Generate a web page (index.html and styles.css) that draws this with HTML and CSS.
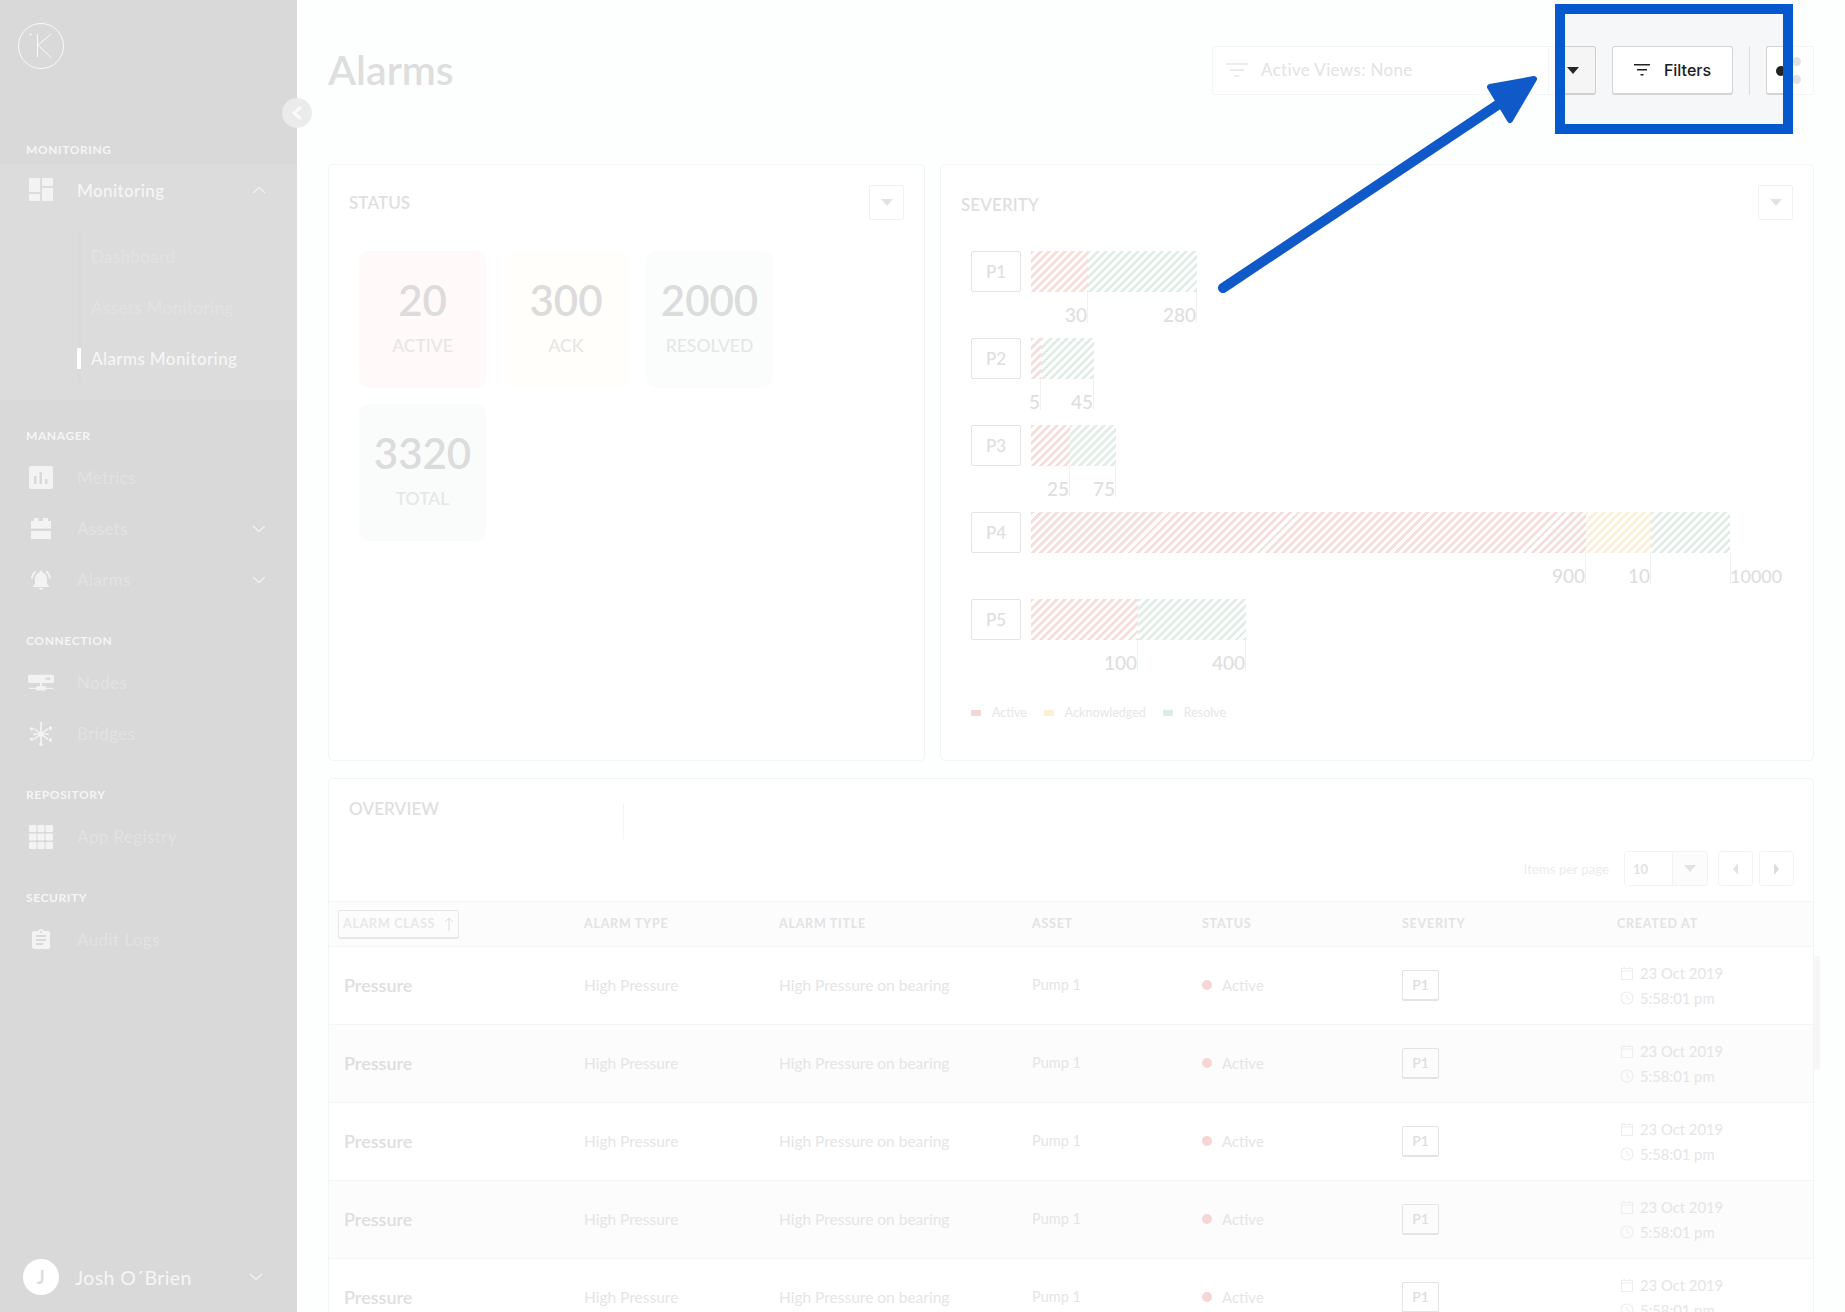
FILE: index.html
```html
<!DOCTYPE html>
<html lang="en">
<head>
<meta charset="utf-8">
<title>Alarms</title>
<link rel="stylesheet" href="styles.css">
</head>
<body>
<aside class="sidebar">
  <div class="logo-wrap">
    <svg class="logo" viewBox="0 0 48 48" width="48" height="48" fill="none" stroke="#fafafa" stroke-width="1"><circle cx="24" cy="24" r="22.5"/><path d="M20.5 12v23M34 12 21 23l13.500 13"/><circle cx="13.500" cy="12.500" r="1" fill="#fafafa" stroke="none"/></svg>
  </div>
  <button class="collapse" aria-label="Collapse"><svg viewBox="0 0 12 16" width="12" height="16" fill="none" stroke="#fafafa" stroke-width="3"><path d="M10 2 3 8l7 6"/></svg></button>

  <div class="nav-label nav-label-first">Monitoring</div>
  <div class="nav-group">
    <div class="nav-item nav-item-on">
      <svg class="nav-icon" viewBox="0 0 24 24"><path d="M0 0h11v14H0zM13 0h11v8H13zM0 16h11v7H0zM13 10h11v13H13z"/></svg>
      <span class="nav-text">Monitoring</span>
      <svg class="chev" viewBox="0 0 14 8"><path d="M1 7 7 1.500 13 7"/></svg>
    </div>
    <div class="sub-list">
      <div class="sub-item">Dashboard</div>
      <div class="sub-item">Assets Monitoring</div>
      <div class="sub-item sub-item-on">Alarms Monitoring</div>
    </div>
  </div>

  <div class="nav-label">Manager</div>
  <div class="nav-item">
    <svg class="nav-icon" viewBox="0 0 24 24"><path fill-rule="evenodd" d="M2 0h20a2 2 0 0 1 2 2v19a2 2 0 0 1-2 2H2a2 2 0 0 1-2-2V2a2 2 0 0 1 2-2zM5 10v8h2.500v-8zM10.500 6v12H13V6zM16 13v5h2.500v-5z"/></svg>
    <span class="nav-text">Metrics</span>
  </div>
  <div class="nav-item">
    <svg class="nav-icon" viewBox="0 0 24 24"><path d="M5 1h4.500v3H14V1h5v3h3v7.500H2V4h3zM2 14h20v8H2z"/></svg>
    <span class="nav-text">Assets</span>
    <svg class="chev" viewBox="0 0 14 8"><path d="M1 1 7 6.500 13 1"/></svg>
  </div>
  <div class="nav-item">
    <svg class="nav-icon" viewBox="0 0 24 24"><path d="M7.580 4.080 6.150 2.650C3.750 4.480 2.170 7.300 2.030 10.500h2c.15-2.650 1.510-4.970 3.550-6.420zm12.390 6.420h2c-.15-3.200-1.730-6.020-4.120-7.850l-1.420 1.430c2.020 1.450 3.390 3.770 3.540 6.420zM18 11c0-3.070-1.640-5.640-4.500-6.320V4c0-.83-.67-1.500-1.500-1.500s-1.500.67-1.500 1.500v.68C7.630 5.360 6 7.920 6 11v5l-2 2v1h16v-1l-2-2v-5zm-6 11c.14 0 .27-.01.4-.04.65-.14 1.180-.58 1.440-1.180.1-.24.15-.5.15-.78h-4c.01 1.100.9 2 2.010 2z"/></svg>
    <span class="nav-text">Alarms</span>
    <svg class="chev" viewBox="0 0 14 8"><path d="M1 1 7 6.500 13 1"/></svg>
  </div>

  <div class="nav-label">Connection</div>
  <div class="nav-item">
    <svg class="nav-icon nav-icon-wide" viewBox="0 0 28 18"><path fill-rule="evenodd" d="M2 0h24a2 2 0 0 1 2 2v5a2 2 0 0 1-2 2H2a2 2 0 0 1-2-2V2a2 2 0 0 1 2-2zM19 3v2.500h5V3zM13 9h2v3.500h4V14h8v1.500h-8V17H9v-1.500H1V14h8v-1.500h4z"/></svg>
    <span class="nav-text">Nodes</span>
  </div>
  <div class="nav-item">
    <svg class="nav-icon nav-icon-wide" viewBox="0 0 28 28"><path d="M13 1.500a1.500 1.500 0 1 1 2 0V12l7-5 1 1.500-7 4.500 7 .5v2l-7-1 7 5-1 1.500-7-5v9h-2v-9l-7 5-1-1.500 7-5-7 1v-2l7-.5-7-4.500L6 7l7 5z"/><circle cx="3" cy="8" r="2"/><circle cx="25" cy="7" r="2"/><circle cx="3" cy="20" r="2"/><circle cx="25" cy="21" r="2"/><circle cx="14" cy="26" r="2"/><circle cx="14" cy="14" r="3"/></svg>
    <span class="nav-text">Bridges</span>
  </div>

  <div class="nav-label">Repository</div>
  <div class="nav-item">
    <svg class="nav-icon" viewBox="0 0 24 24"><path d="M1 0h5.500a1 1 0 0 1 1 1v5a1 1 0 0 1-1 1H1a1 1 0 0 1-1-1V1a1 1 0 0 1 1-1zM9.500 0h5a1 1 0 0 1 1 1v5a1 1 0 0 1-1 1h-5a1 1 0 0 1-1-1V1a1 1 0 0 1 1-1zM17.500 0H23a1 1 0 0 1 1 1v5a1 1 0 0 1-1 1h-5.500a1 1 0 0 1-1-1V1a1 1 0 0 1 1-1zM1 8.500h5.500a1 1 0 0 1 1 1v5a1 1 0 0 1-1 1H1a1 1 0 0 1-1-1v-5a1 1 0 0 1 1-1zM9.500 8.500h5a1 1 0 0 1 1 1v5a1 1 0 0 1-1 1h-5a1 1 0 0 1-1-1v-5a1 1 0 0 1 1-1zM17.500 8.500H23a1 1 0 0 1 1 1v5a1 1 0 0 1-1 1h-5.500a1 1 0 0 1-1-1v-5a1 1 0 0 1 1-1zM1 17h5.500a1 1 0 0 1 1 1v5a1 1 0 0 1-1 1H1a1 1 0 0 1-1-1v-5a1 1 0 0 1 1-1zM9.500 17h5a1 1 0 0 1 1 1v5a1 1 0 0 1-1 1h-5a1 1 0 0 1-1-1v-5a1 1 0 0 1 1-1zM17.500 17H23a1 1 0 0 1 1 1v5a1 1 0 0 1-1 1h-5.500a1 1 0 0 1-1-1v-5a1 1 0 0 1 1-1z"/></svg>
    <span class="nav-text">App Registry</span>
  </div>

  <div class="nav-label">Security</div>
  <div class="nav-item">
    <svg class="nav-icon" viewBox="0 0 24 24"><path d="M19 3h-4.180C14.400 1.840 13.300 1 12 1c-1.300 0-2.400.84-2.820 2H5c-1.100 0-2 .9-2 2v14c0 1.100.9 2 2 2h14c1.100 0 2-.9 2-2V5c0-1.100-.9-2-2-2zm-7 0c.55 0 1 .45 1 1s-.45 1-1 1-1-.45-1-1 .45-1 1-1zm2 14H7v-2h7v2zm3-4H7v-2h10v2zm0-4H7V7h10v2z"/></svg>
    <span class="nav-text">Audit Logs</span>
  </div>

  <div class="user">
    <span class="avatar">J</span>
    <span class="user-name">Josh O´Brien</span>
    <svg class="chev" viewBox="0 0 14 8"><path d="M1 1 7 6.500 13 1"/></svg>
  </div>
</aside>

<main class="main">
  <header class="topbar">
    <h1 class="page-title">Alarms</h1>
    <div class="tools">
      <div class="views">
        <div class="views-main">
          <svg class="views-icon" viewBox="0 0 22 16" width="22" height="16"><path d="M0 1h22v2H0zM4 7h14v2H4zM8.500 13h5v2h-5z"/></svg>
          <span class="views-text">Active Views: None</span>
        </div>
        <div class="views-gap"></div>
        <div class="views-caret"><span class="tri tri-dark"></span></div>
      </div>
      <button class="filters">
        <svg viewBox="0 0 16 14" width="16" height="14"><path d="M0 1h16v1.500H0zM3 6h10v1.500H3zM6.500 11h3v1.500h-3z"/></svg>
        <span>Filters</span>
      </button>
      <div class="tool-divider"></div>
      <div class="share">
        <div class="share-lit"><span class="share-dot"></span></div>
        <div class="share-rest"><span class="share-faint"></span><span class="share-faint"></span></div>
      </div>
    </div>
    <div class="spot-bg"></div>
    <div class="spot-frame"></div>
    <svg class="arrow" viewBox="0 0 330 225" width="330" height="225">
      <path d="M8 218 290 30" fill="none" stroke="#1059c8" stroke-width="10" stroke-linecap="round"/>
      <path d="M319 9 275 17 295 50z" fill="#1059c8" stroke="#1059c8" stroke-width="6" stroke-linejoin="round"/>
    </svg>
  </header>

  <section class="charts">
    <div class="card status-card">
      <div class="card-head">
        <h2 class="card-title">Status</h2>
        <button class="mini-btn" aria-label="Options"><span class="tri"></span></button>
      </div>
      <div class="tiles">
        <div class="tile tile-red"><div class="tile-num">20</div><div class="tile-label">ACTIVE</div></div>
        <div class="tile tile-yellow"><div class="tile-num">300</div><div class="tile-label">ACK</div></div>
        <div class="tile tile-green"><div class="tile-num">2000</div><div class="tile-label">RESOLVED</div></div>
        <div class="tile tile-grey"><div class="tile-num">3320</div><div class="tile-label">TOTAL</div></div>
      </div>
    </div>

    <div class="card severity-card">
      <div class="card-head">
        <h2 class="card-title card-title-low">Severity</h2>
        <button class="mini-btn" aria-label="Options"><span class="tri"></span></button>
      </div>
      <div class="sev-rows">
        <div class="sev-row">
          <div class="p-box">P1</div>
          <div class="sev-bar">
            <div class="seg" style="width:57px"><div class="fill fill-red"></div><div class="tick"><span>30</span></div></div>
            <div class="seg" style="width:109px"><div class="fill fill-green"></div><div class="tick"><span>280</span></div></div>
          </div>
        </div>
        <div class="sev-row">
          <div class="p-box">P2</div>
          <div class="sev-bar">
            <div class="seg" style="width:10px"><div class="fill fill-red"></div><div class="tick"><span>5</span></div></div>
            <div class="seg" style="width:53px"><div class="fill fill-green"></div><div class="tick"><span>45</span></div></div>
          </div>
        </div>
        <div class="sev-row">
          <div class="p-box">P3</div>
          <div class="sev-bar">
            <div class="seg" style="width:39px"><div class="fill fill-red"></div><div class="tick"><span>25</span></div></div>
            <div class="seg" style="width:46px"><div class="fill fill-green"></div><div class="tick"><span>75</span></div></div>
          </div>
        </div>
        <div class="sev-row">
          <div class="p-box">P4</div>
          <div class="sev-bar">
            <div class="seg" style="width:555px"><div class="fill fill-red"></div><div class="tick"><span>900</span></div></div>
            <div class="seg" style="width:65px"><div class="fill fill-yellow"></div><div class="tick"><span>10</span></div></div>
            <div class="seg" style="width:79px"><div class="fill fill-green"></div><div class="tick tick-out"><span>10000</span></div></div>
          </div>
        </div>
        <div class="sev-row">
          <div class="p-box">P5</div>
          <div class="sev-bar">
            <div class="seg" style="width:107px"><div class="fill fill-red"></div><div class="tick"><span>100</span></div></div>
            <div class="seg" style="width:108px"><div class="fill fill-green"></div><div class="tick"><span>400</span></div></div>
          </div>
        </div>
      </div>
      <div class="legend">
        <span class="legend-item"><i class="swatch swatch-red"></i>Active</span>
        <span class="legend-item"><i class="swatch swatch-yellow"></i>Acknowledged</span>
        <span class="legend-item"><i class="swatch swatch-green"></i>Resolve</span>
      </div>
    </div>
  </section>

  <section class="card overview">
    <div class="ov-top">
      <h2 class="card-title ov-title">Overview</h2>
      <div class="ov-divider"></div>
    </div>
    <div class="pager">
      <span class="pager-label">Items per page</span>
      <div class="page-select"><span class="page-num">10</span><span class="page-caret"><span class="tri"></span></span></div>
      <button class="page-btn" aria-label="Previous"><span class="tri-left"></span></button>
      <button class="page-btn" aria-label="Next"><span class="tri-right"></span></button>
    </div>

    <div class="table-row table-head">
      <div><span class="sort-box">ALARM CLASS <svg viewBox="0 0 10 14" width="10" height="14" fill="none" stroke="#dedede" stroke-width="1"><path d="M5 14V1M1 5l4-4 4 4"/></svg></span></div>
      <div>ALARM TYPE</div><div>ALARM TITLE</div><div>ASSET</div><div>STATUS</div><div>SEVERITY</div><div>CREATED AT</div>
    </div>

    <div class="table-row body-row">
      <div class="cell-class">Pressure</div><div class="cell-text">High Pressure</div><div class="cell-text">High Pressure on bearing</div><div class="cell-text cell-num">Pump 1</div>
      <div class="cell-text cell-status"><i class="dot"></i>Active</div><div><span class="p-chip">P1</span></div>
      <div class="cell-date"><span class="date-line"><svg class="date-icon" viewBox="0 0 14 14"><path d="M1.500 2.500h11v11h-11zM1.500 5h11M4 .5v2M10 .5v2"/></svg>23 Oct 2019</span><span class="date-line"><svg class="date-icon" viewBox="0 0 14 14"><circle cx="7" cy="7" r="6"/><path d="M7 3.500V7l2.500 2"/></svg>5:58:01 pm</span></div>
    </div>
    <div class="table-row body-row">
      <div class="cell-class">Pressure</div><div class="cell-text">High Pressure</div><div class="cell-text">High Pressure on bearing</div><div class="cell-text cell-num">Pump 1</div>
      <div class="cell-text cell-status"><i class="dot"></i>Active</div><div><span class="p-chip">P1</span></div>
      <div class="cell-date"><span class="date-line"><svg class="date-icon" viewBox="0 0 14 14"><path d="M1.500 2.500h11v11h-11zM1.500 5h11M4 .5v2M10 .5v2"/></svg>23 Oct 2019</span><span class="date-line"><svg class="date-icon" viewBox="0 0 14 14"><circle cx="7" cy="7" r="6"/><path d="M7 3.500V7l2.500 2"/></svg>5:58:01 pm</span></div>
    </div>
    <div class="table-row body-row">
      <div class="cell-class">Pressure</div><div class="cell-text">High Pressure</div><div class="cell-text">High Pressure on bearing</div><div class="cell-text cell-num">Pump 1</div>
      <div class="cell-text cell-status"><i class="dot"></i>Active</div><div><span class="p-chip">P1</span></div>
      <div class="cell-date"><span class="date-line"><svg class="date-icon" viewBox="0 0 14 14"><path d="M1.500 2.500h11v11h-11zM1.500 5h11M4 .5v2M10 .5v2"/></svg>23 Oct 2019</span><span class="date-line"><svg class="date-icon" viewBox="0 0 14 14"><circle cx="7" cy="7" r="6"/><path d="M7 3.500V7l2.500 2"/></svg>5:58:01 pm</span></div>
    </div>
    <div class="table-row body-row">
      <div class="cell-class">Pressure</div><div class="cell-text">High Pressure</div><div class="cell-text">High Pressure on bearing</div><div class="cell-text cell-num">Pump 1</div>
      <div class="cell-text cell-status"><i class="dot"></i>Active</div><div><span class="p-chip">P1</span></div>
      <div class="cell-date"><span class="date-line"><svg class="date-icon" viewBox="0 0 14 14"><path d="M1.500 2.500h11v11h-11zM1.500 5h11M4 .5v2M10 .5v2"/></svg>23 Oct 2019</span><span class="date-line"><svg class="date-icon" viewBox="0 0 14 14"><circle cx="7" cy="7" r="6"/><path d="M7 3.500V7l2.500 2"/></svg>5:58:01 pm</span></div>
    </div>
    <div class="table-row body-row">
      <div class="cell-class">Pressure</div><div class="cell-text">High Pressure</div><div class="cell-text">High Pressure on bearing</div><div class="cell-text cell-num">Pump 1</div>
      <div class="cell-text cell-status"><i class="dot"></i>Active</div><div><span class="p-chip">P1</span></div>
      <div class="cell-date"><span class="date-line"><svg class="date-icon" viewBox="0 0 14 14"><path d="M1.500 2.500h11v11h-11zM1.500 5h11M4 .5v2M10 .5v2"/></svg>23 Oct 2019</span><span class="date-line"><svg class="date-icon" viewBox="0 0 14 14"><circle cx="7" cy="7" r="6"/><path d="M7 3.500V7l2.500 2"/></svg>5:58:01 pm</span></div>
    </div>
  </section>
  <div class="scrollbar"></div>
</main>
</body>
</html>
```

FILE: styles.css
```css
* { box-sizing: border-box; }
html, body { margin: 0; height: 100%; overflow: hidden; }
body {
  display: flex;
  width: 1845px;
  height: 1312px;
  font-family: "Lato", "Open Sans", sans-serif;
  background: #fdfefe;
  color: #e2e2e2;
}
h1, h2 { margin: 0; }
button { font-family: inherit; padding: 0; background: none; }

/* Sidebar */
.sidebar {
  position: relative;
  z-index: 2;
  width: 297px;
  height: 1312px;
  flex: none;
  background: #d9d9d9;
  display: flex;
  flex-direction: column;
}
.logo-wrap { height: 141px; padding: 22px 0 0 17px; }
.logo { display: block; }
.collapse {
  position: absolute;
  left: 282px;
  top: 98px;
  width: 30px;
  height: 30px;
  border: 0;
  border-radius: 50%;
  background: #ebebeb;
  display: flex;
  align-items: center;
  justify-content: center;
}
.nav-label {
  height: 16px;
  line-height: 16px;
  margin: 28px 0 8px;
  padding-left: 26px;
  font-size: 12px;
  font-weight: 700;
  letter-spacing: .6px;
  text-transform: uppercase;
  color: #f5f5f5;
}
.nav-label-first { margin: 1px 0 6px; }
.nav-group { background: #dcdcdc; height: 236px; }
.nav-item {
  height: 51px;
  display: flex;
  align-items: center;
  padding: 0 31px 0 29px;
  font-size: 17px;
  letter-spacing: .4px;
  color: #e2e2e2;
  flex: none;
}
.nav-item-on { height: 52px; color: #f6f6f6; font-weight: 500; }
.nav-icon { width: 24px; height: 24px; fill: #f3f3f3; flex: none; }
.nav-icon-wide { width: 26px; margin: 0 -1px; }
.nav-text { margin-left: 24px; flex: 1; }
.chev { width: 14px; height: 8px; fill: none; stroke: #f0f0f0; stroke-width: 1.500; flex: none; }
.sub-list {
  margin: 15px 0 0 77px;
  width: 210px;
  height: 153px;
  border-left: 4px solid #dadada;
}
.sub-item {
  position: relative;
  height: 51px;
  line-height: 51px;
  padding-left: 10px;
  font-size: 17px;
  letter-spacing: .4px;
  color: #e2e2e2;
  white-space: nowrap;
}
.sub-item-on { color: #f6f6f6; font-weight: 500; }
.sub-item-on::before {
  content: "";
  position: absolute;
  left: -4px;
  top: 15px;
  width: 4px;
  height: 21px;
  background: #fff;
}
.user {
  margin-top: auto;
  height: 70px;
  padding: 0 34px 0 23px;
  display: flex;
  align-items: center;
  color: #f6f6f6;
  font-size: 19.500px;
  letter-spacing: .4px;
}
.avatar {
  width: 36px;
  height: 36px;
  border-radius: 50%;
  background: #fff;
  color: #dcdcdc;
  font-size: 18px;
  font-weight: 700;
  display: flex;
  align-items: center;
  justify-content: center;
  flex: none;
}
.user-name { margin-left: 16px; flex: 1; }

/* Main */
.main {
  position: relative;
  flex: 1;
  min-width: 0;
  height: 1312px;
  overflow: hidden;
  padding: 0 31px;
}
.topbar {
  height: 164px;
  padding-top: 46px;
  display: flex;
  justify-content: space-between;
  align-items: flex-start;
}
.page-title {
  font-size: 41px;
  line-height: 47px;
  font-weight: 600;
  color: #dedede;
}
.tools { display: flex; align-items: stretch; height: 49px; }
.views { display: flex; width: 384px; margin-right: 16px; }
.views-main {
  width: 336px;
  display: flex;
  align-items: center;
  padding: 0 0 2px 13px;
  background: #fff;
  border: 1px solid #f4f5f5;
  border-right: 0;
  border-radius: 3px 0 0 3px;
}
.views-icon { fill: #ebebeb; flex: none; }
.views-text { margin-left: 13px; font-size: 17px; letter-spacing: .35px; color: #e3e3e3; }
.views-gap { width: 7px; border: 1px solid #f4f5f5; border-right: 0; background: #fff; }
.views-caret {
  position: relative;
  z-index: 3;
  width: 41px;
  padding: 0 0 0 12px;
  display: flex;
  align-items: center;
  background: #f5f5f5;
  border: 1px solid #d0d0d0;
  border-left: 0;
  border-bottom-width: 2px;
  border-radius: 0 3px 3px 0;
}
.filters {
  position: relative;
  z-index: 3;
  width: 121px;
  display: flex;
  align-items: center;
  justify-content: center;
  gap: 14px;
  background: #fff;
  border: 1px solid #d4d4d4;
  border-bottom-width: 2px;
  border-radius: 3px;
  font-family: "Inter", sans-serif;
  font-size: 16px;
  font-weight: 500;
  color: #1c1c1c;
}
.filters svg { fill: #222; flex: none; }
.tool-divider {
  position: relative;
  z-index: 3;
  width: 1px;
  margin: 0 16px;
  background: #dcdcdc;
}
.share { display: flex; width: 48px; }
.share-lit {
  position: relative;
  z-index: 3;
  width: 17px;
  background: #fff;
  border: 1px solid #d4d4d4;
  border-right: 0;
  border-bottom-width: 2px;
  border-radius: 3px 0 0 3px;
}
.share-dot {
  position: absolute;
  right: -3px;
  top: 19px;
  width: 10px;
  height: 10px;
  border-radius: 50%;
  background: #222;
}
.share-rest {
  flex: 1;
  background: #fff;
  border: 1px solid #f4f5f5;
  border-left: 0;
  border-radius: 0 3px 3px 0;
  padding: 10px 0 0 9px;
  display: flex;
  flex-direction: column;
  gap: 9px;
}
.share-faint { width: 9px; height: 9px; border-radius: 50%; background: #e2e2e2; }
.spot-bg, .spot-frame {
  position: absolute;
  left: 1258px;
  top: 4px;
  width: 238px;
  height: 130px;
}
.spot-bg { z-index: 1; background: #f6f7f9; }
.spot-frame { z-index: 4; border: 10px solid #0559cc; pointer-events: none; }
.arrow { position: absolute; left: 918px; top: 70px; z-index: 5; pointer-events: none; }

.tri {
  display: block;
  width: 0;
  height: 0;
  border-left: 6px solid transparent;
  border-right: 6px solid transparent;
  border-top: 7px solid #e3e3e3;
}
.tri-dark { border-top-color: #262626; }
.tri-left, .tri-right {
  display: block;
  width: 0;
  height: 0;
  border-top: 6px solid transparent;
  border-bottom: 6px solid transparent;
}
.tri-left { border-right: 5px solid #e3e3e3; }
.tri-right { border-left: 5px solid #dcdcdc; }

/* Cards */
.charts {
  display: grid;
  grid-template-columns: 597px 874px;
  gap: 15px;
  height: 597px;
  position: relative;
}
.card {
  background: #fff;
  border: 1px solid #f3f5f5;
  border-radius: 5px;
}
.card-head {
  display: flex;
  justify-content: space-between;
  align-items: center;
  padding: 20px 20px 0 20px;
}
.card-title {
  font-size: 17px;
  font-weight: 600;
  letter-spacing: .1px;
  text-transform: uppercase;
  color: #dfdfdf;
}
.card-title-low { padding-top: 4px; }
.mini-btn {
  width: 35px;
  height: 35px;
  background: #fff;
  border: 1px solid #f1f1f1;
  border-radius: 2px;
  display: flex;
  align-items: center;
  justify-content: center;
}
.tiles {
  display: grid;
  grid-template-columns: repeat(3, 127px);
  gap: 16px 16.5px;
  margin: 31px 0 0 30px;
}
.tile {
  height: 137px;
  border-radius: 10px;
  padding-top: 24px;
  text-align: center;
}
.tile-red { background: #fff9f9; }
.tile-yellow { background: #fffefb; }
.tile-green { background: #fbfdfd; }
.tile-grey { background: #fafbfb; }
.tile-num { font-size: 42px; line-height: 50px; font-weight: 600; color: #dcdcdc; }
.tile-label { margin-top: 10px; font-size: 17.500px; line-height: 22px; font-weight: 500; color: #e6e6e6; }

/* Severity */
.sev-rows { padding: 31px 0 0 30px; }
.sev-row { display: flex; height: 87px; }
.p-box {
  width: 50px;
  height: 41px;
  border: 1px solid #e4e4e4;
  border-radius: 2px;
  line-height: 40px;
  text-align: center;
  font-size: 17px;
  font-weight: 500;
  color: #dedede;
  background: #fff;
}
.sev-bar { display: flex; margin-left: 10px; }
.seg { display: flex; flex-direction: column; flex: none; }
.fill { height: 41px; }
.fill-red { background: repeating-linear-gradient(135deg, #f8dedb 0 2.800px, #fff 2.800px 5.700px); }
.fill-green { background: repeating-linear-gradient(135deg, #e0eee7 0 2.800px, #fff 2.800px 5.700px); }
.fill-yellow { background: repeating-linear-gradient(135deg, #fdf0db 0 2.800px, #fff 2.800px 5.700px); }
.tick {
  height: 31px;
  border-right: 1px solid #f1f1f1;
  display: flex;
  justify-content: flex-end;
  padding: 12px 0 0 0;
  font-size: 19px;
  line-height: 22px;
  font-weight: 500;
  color: #dedede;
  white-space: nowrap;
}
.tick-out { justify-content: flex-start; padding: 12px 0 0 100%; font-size: 18px; }
.legend {
  display: flex;
  gap: 17px;
  margin: 19px 0 0 30px;
  font-size: 12.500px;
  line-height: 16px;
  color: #e6e6e6;
}
.legend-item { display: flex; align-items: center; }
.swatch { width: 10px; height: 6px; margin-right: 11px; border-radius: 1px; }
.swatch-red { background: #f5d5d5; }
.swatch-yellow { background: #fdeed6; }
.swatch-green { background: #dcebe3; }

/* Overview */
.overview { margin-top: 17px; height: 600px; overflow: hidden; }
.ov-top { display: flex; padding: 18px 0 0 20px; height: 60px; }
.ov-title { width: 274px; line-height: 24px; }
.ov-divider { width: 1px; height: 36px; margin-top: 6px; background: #f4f5f5; }
.pager {
  display: flex;
  align-items: center;
  justify-content: flex-end;
  height: 35px;
  margin: 12px 0 15px;
  padding-right: 19px;
}
.pager-label { font-size: 13px; letter-spacing: .1px; color: #ececec; margin-right: 15px; }
.page-select {
  width: 84px;
  height: 35px;
  display: flex;
  border: 1px solid #f3f3f3;
  border-radius: 3px;
  font-size: 13px;
  font-weight: 700;
  color: #e3e3e3;
}
.page-num { width: 47px; padding-left: 8px; line-height: 34px; }
.page-caret {
  flex: 1;
  display: flex;
  align-items: center;
  justify-content: center;
  background: #fcfcfc;
  border-left: 1px solid #f3f3f3;
}
.page-btn {
  width: 35px;
  height: 35px;
  margin-left: 6px;
  background: #fff;
  border: 1px solid #f3f3f3;
  border-radius: 3px;
  display: flex;
  align-items: center;
  justify-content: center;
}
.page-btn:first-of-type { margin-left: 10px; }
.table-row {
  display: grid;
  grid-template-columns: 240px 195px 253px 170px 200px 215px 180px;
  align-items: center;
  padding-left: 15px;
  border-bottom: 1px solid #f5f5f5;
}
.table-head {
  height: 46px;
  background: #fcfcfc;
  border-top: 1px solid #f5f5f5;
  font-size: 12.500px;
  font-weight: 700;
  letter-spacing: .75px;
  line-height: 44px;
  color: #e3e3e3;
}
.sort-box {
  display: inline-flex;
  align-items: center;
  gap: 9px;
  height: 29px;
  margin-left: -6px;
  padding: 0 4px;
  border: 1px solid #e6e8e8;
  border-bottom-width: 2px;
  border-radius: 2px;
  color: #e8e8e8;
}
.body-row {
  height: 78px;
  font-size: 15.500px;
  line-height: 22px;
  color: #e5e5e5;
}
.cell-text, .cell-class { padding-bottom: 2px; }
.body-row:nth-of-type(even) { background: #fff; }
.body-row:nth-of-type(odd) { background: #fcfcfc; }
.cell-class { font-size: 18px; font-weight: 600; color: #dedede; }
.cell-num { font-size: 14.500px; }
.cell-status { display: flex; align-items: center; font-size: 15px; }
.dot { width: 10px; height: 10px; border-radius: 50%; background: #f5d5d5; margin-right: 10px; }
.p-chip {
  display: block;
  width: 37px;
  height: 31px;
  line-height: 28px;
  text-align: center;
  border: 1px solid #e4e4e4;
  border-bottom-width: 2px;
  border-radius: 2px;
  font-size: 14px;
  font-weight: 600;
  color: #dedede;
}
.cell-date { display: flex; flex-direction: column; gap: 1px; padding-left: 3px; font-size: 14.800px; }
.date-line { display: flex; align-items: center; line-height: 24px; white-space: nowrap; }
.date-icon {
  width: 14px;
  height: 14px;
  margin-right: 6px;
  fill: none;
  stroke: #eeeeee;
  stroke-width: 1.200;
  flex: none;
}
.scrollbar {
  position: absolute;
  left: 1517px;
  top: 956px;
  width: 6px;
  height: 114px;
  border-radius: 3px;
  background: #f6f6f6;
}
```
